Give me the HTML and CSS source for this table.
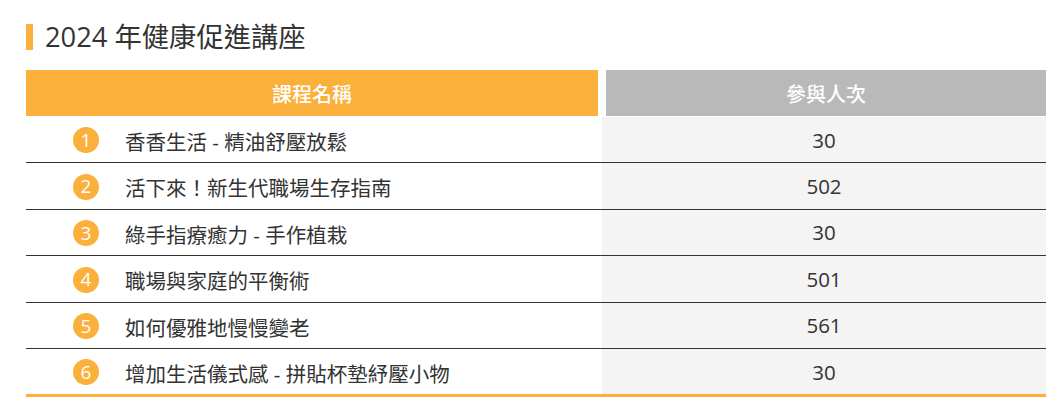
FILE: index.html
```html
<!DOCTYPE html>
<html lang="zh-Hant">
<head>
<meta charset="utf-8">
<title>2024 年健康促進講座</title>
<link rel="stylesheet" href="styles.css">
</head>
<body>
<main class="page">
  <h2 class="title">2024 年健康促進講座</h2>
  <table class="courses">
    <colgroup><col class="col-name"><col class="col-count"></colgroup>
    <thead>
      <tr><th class="th-name">課程名稱</th><th class="th-count">參與人次</th></tr>
    </thead>
    <tbody>
      <tr><td class="name"><span class="num">1</span><span class="label">香香生活 - 精油舒壓放鬆</span></td><td class="count">30</td></tr>
      <tr><td class="name"><span class="num">2</span><span class="label">活下來！新生代職場生存指南</span></td><td class="count">502</td></tr>
      <tr><td class="name"><span class="num">3</span><span class="label">綠手指療癒力 - 手作植栽</span></td><td class="count">30</td></tr>
      <tr><td class="name"><span class="num">4</span><span class="label">職場與家庭的平衡術</span></td><td class="count">501</td></tr>
      <tr><td class="name"><span class="num">5</span><span class="label">如何優雅地慢慢變老</span></td><td class="count">561</td></tr>
      <tr><td class="name"><span class="num">6</span><span class="label">增加生活儀式感 - 拼貼杯墊紓壓小物</span></td><td class="count">30</td></tr>
    </tbody>
  </table>
</main>
</body>
</html>
```

FILE: styles.css
```css
html, body {
  margin: 0;
  padding: 0;
  background: #fff;
}

body {
  font-family: "Open Sans", "Noto Sans CJK TC", sans-serif;
  color: #333;
}

.page {
  padding: 24px 12px 0 26px;
}

.title {
  margin: 0 0 20px 0;
  border-left: 7px solid #fbb03b;
  padding-left: 12px;
  font-size: 27.3px;
  line-height: 26px;
  height: 26px;
  font-weight: 400;
  color: #333;
}

.courses {
  width: 1020px;
  border-collapse: separate;
  border-spacing: 0;
  table-layout: fixed;
}

.col-name { width: 576px; }
.col-count { width: 444px; }

.courses th {
  height: 46px;
  padding: 0;
  color: #fff;
  font-size: 20px;
  font-weight: 500;
  text-align: center;
  vertical-align: middle;
  border-bottom: 1px solid #fff;
}

.th-name {
  background: #fbb03b;
  border-right: 4px solid #fff;
}

.th-count {
  background: #b9b9b9;
  border-left: 4px solid #fff;
}

.courses td {
  height: 45.4px;
  padding: 0;
  border-bottom: 1px solid #333;
  vertical-align: middle;
  font-size: 20.5px;
}

.courses tbody tr:last-child td {
  border-bottom: 3px solid #fbb03b;
}

.name {
  padding-left: 47px !important;
}

.name .num {
  display: inline-flex;
  align-items: center;
  justify-content: center;
  width: 26px;
  height: 26px;
  border-radius: 50%;
  background: #fbb03b;
  color: #fff;
  font-size: 19px;
  line-height: 1;
  vertical-align: middle;
  margin-right: 26px;
}

.name .label {
  vertical-align: middle;
  color: #333;
}

.count {
  background: #f4f4f4;
  text-align: center;
  color: #333;
  font-size: 20px;
}
```
